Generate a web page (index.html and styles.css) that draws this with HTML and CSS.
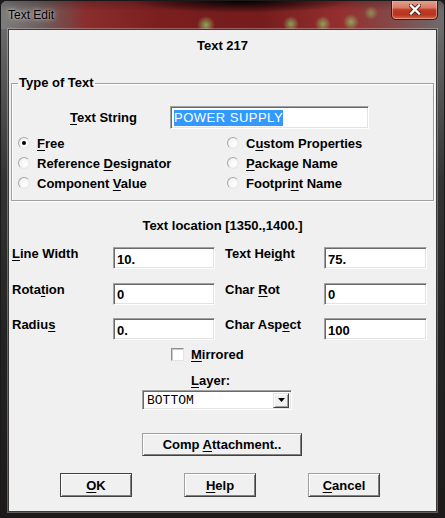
FILE: index.html
```html
<!DOCTYPE html>
<html lang="en">
<head>
    <meta charset="UTF-8">
    <title>Text Edit</title>
    <link rel="stylesheet" href="styles.css">
</head>
<body>
    <div class="window">
        <div class="titlebar">
            <span class="caption">Text Edit</span>
            <span class="close-btn">
                <svg width="12" height="11" viewBox="0 0 12 11">
                    <path d="M2 1.5 L10 9.5 M10 1.5 L2 9.5" stroke="#5a2418" stroke-width="4.2" stroke-linecap="square" fill="none"/>
                    <path d="M2 1.5 L10 9.5 M10 1.5 L2 9.5" stroke="#ffffff" stroke-width="2.4" stroke-linecap="square" fill="none"/>
                </svg>
            </span>
        </div>

        <div class="client">
            <div class="dlg-title">Text 217</div>

            <fieldset class="group">
                <legend>Type of Text</legend>
                <div class="string-row">
                    <span class="string-label"><u>T</u>ext String</span>
                    <div class="edit edit-string"><span class="sel">POWER SUPPLY</span></div>
                </div>
                <div class="radio-grid">
                    <div class="radio"><span class="radio-box checked"></span><span><u>F</u>ree</span></div>
                    <div class="radio"><span class="radio-box"></span><span>C<u>u</u>stom Properties</span></div>
                    <div class="radio"><span class="radio-box"></span><span>Reference <u>D</u>esignator</span></div>
                    <div class="radio"><span class="radio-box"></span><span><u>P</u>ackage Name</span></div>
                    <div class="radio"><span class="radio-box"></span><span>Component <u>V</u>alue</span></div>
                    <div class="radio"><span class="radio-box"></span><span>Footpri<u>n</u>t Name</span></div>
                </div>
            </fieldset>

            <div class="location">Text location [1350.,1400.]</div>

            <div class="field-grid">
                <span class="field-label"><u>L</u>ine Width</span>
                <div class="edit">10.</div>
                <span class="field-label right">Text Hei<u>g</u>ht</span>
                <div class="edit">75.</div>

                <span class="field-label">Rota<u>t</u>ion</span>
                <div class="edit">0</div>
                <span class="field-label right">Char <u>R</u>ot</span>
                <div class="edit">0</div>

                <span class="field-label">Radiu<u>s</u></span>
                <div class="edit">0.</div>
                <span class="field-label right">Char Asp<u>e</u>ct</span>
                <div class="edit">100</div>
            </div>

            <div class="check-row">
                <span class="check-box"></span>
                <span><u>M</u>irrored</span>
            </div>

            <div class="layer-block">
                <div class="layer-label"><u>L</u>ayer:</div>
                <div class="combo">
                    <span class="combo-text">BOTTOM</span>
                    <span class="combo-btn">
                        <svg width="7" height="4" viewBox="0 0 7 4"><path d="M0 0 H7 L3.5 4 Z" fill="#000"/></svg>
                    </span>
                </div>
                <div class="btn btn-comp"><span>Comp <u>A</u>ttachment..</span></div>
            </div>

            <div class="button-row">
                <div class="btn btn-default"><span><u>O</u>K</span></div>
                <div class="btn"><span><u>H</u>elp</span></div>
                <div class="btn"><span><u>C</u>ancel</span></div>
            </div>
        </div>
    </div>
</body>
</html>
```

FILE: styles.css
```css
* {
    margin: 0;
    padding: 0;
    box-sizing: border-box;
}

body {
    background-color: #1c1c1c;
    font-family: "Liberation Sans", Arial, sans-serif;
    font-size: 13px;
    color: #000;
}

u {
    text-decoration-thickness: 1px;
    text-underline-offset: 2px;
}

/* Window frame */
.window {
    width: 445px;
    height: 518px;
    display: flex;
    flex-direction: column;
    border: 1px solid #1a1a1a;
    border-radius: 7px 7px 5px 5px;
    overflow: hidden;
    background: linear-gradient(to bottom, #767676 0, #5e5e5e 60px, #333 180px, #242424 330px, #1e1a1a 100%);
}

.titlebar {
    height: 28px;
    flex-shrink: 0;
    display: flex;
    justify-content: space-between;
    align-items: flex-start;
    background:
        radial-gradient(circle at 205px 24px, rgba(150, 210, 110, 0.75) 0, rgba(150, 210, 110, 0) 9px),
        radial-gradient(circle at 290px 23px, rgba(150, 210, 110, 0.7) 0, rgba(150, 210, 110, 0) 8px),
        radial-gradient(circle at 322px 23px, rgba(150, 210, 110, 0.7) 0, rgba(150, 210, 110, 0) 8px),
        radial-gradient(circle at 350px 21px, rgba(150, 210, 110, 0.7) 0, rgba(150, 210, 110, 0) 8px),
        radial-gradient(circle at 370px 12px, rgba(150, 210, 110, 0.55) 0, rgba(150, 210, 110, 0) 7px),
        radial-gradient(ellipse 110px 12px at 240px 0, #050202 0, rgba(5, 2, 2, 0) 100%),
        linear-gradient(to bottom, rgba(0, 0, 0, 0.2) 0, rgba(0, 0, 0, 0) 10px),
        linear-gradient(to right, #7d7d7d 0, #6d5a5a 45px, #8a2d2d 85px, #7a1e1e 160px, #761c1c 260px, #942f2f 340px, #844a4a 395px, #6c6c6c 443px);
}

.caption {
    padding: 6px 0 0 7px;
    font-size: 12px;
    line-height: 16px;
    color: #000;
    text-shadow: 0 0 6px rgba(255, 255, 255, 0.7), 0 0 3px rgba(255, 255, 255, 0.5);
}

.close-btn {
    width: 47px;
    height: 20px;
    margin-right: 6px;
    margin-top: -1px;
    display: flex;
    align-items: center;
    justify-content: center;
    border: 1px solid #3a1710;
    border-top: none;
    border-radius: 0 0 5px 5px;
    background: linear-gradient(to bottom, #e6a697 0, #d77b66 40%, #c03a22 52%, #b9341e 78%, #d5684c 100%);
    box-shadow: inset 0 0 0 1px rgba(255, 220, 210, 0.45);
}

/* Client area */
.client {
    flex: 1;
    margin: 0 7px 5px 7px;
    background-color: #f0f0f0;
    border: 1px solid #3a3a3a;
    box-shadow: 0 0 0 1px rgba(220, 220, 220, 0.35);
    display: flex;
    flex-direction: column;
    font-weight: bold;
}

.dlg-title {
    margin-top: 8px;
    line-height: 16px;
    text-align: center;
}

/* Type of Text group */
.group {
    margin: 21px 2px 0 2px;
    padding: 0 0 7px 0;
    border: 1px solid #a0a0a0;
    box-shadow: 1px 1px 0 #fff, inset 1px 1px 0 #fff;
    min-width: 0;
}

.group legend {
    margin-left: 6px;
    padding: 0 1px;
    line-height: 16px;
}

.string-row {
    display: flex;
    align-items: center;
    margin-top: 15px;
    padding-left: 58px;
    height: 23px;
}

.string-label {
    width: 100px;
}

.edit {
    height: 22px;
    background-color: #fff;
    border: 1px solid;
    border-color: #a0a0a0 #fff #fff #a0a0a0;
    box-shadow: inset 1px 1px 0 #696969, inset -1px -1px 0 #e3e3e3;
    padding: 0 0 0 3px;
    display: flex;
    align-items: center;
    padding-top: 2px;
}

.edit-string {
    width: 199px;
    height: 23px;
    padding-top: 0;
    font-weight: normal;
}

.sel {
    background-color: #3399ff;
    color: #fff;
    line-height: 16px;
    letter-spacing: 0.5px;
}

.radio-grid {
    display: grid;
    grid-template-columns: 209px 1fr;
    grid-auto-rows: 20px;
    margin-top: 4px;
    padding-left: 6px;
}

.radio {
    display: flex;
    align-items: center;
    gap: 7px;
}

.radio-box {
    width: 12px;
    height: 12px;
    border-radius: 50%;
    border: 1px solid;
    border-color: #a8a8a8 #e6e6e6 #e6e6e6 #a8a8a8;
    background: radial-gradient(circle at 60% 60%, #fff 0, #f4f4f4 60%, #dcdcdc 100%);
    display: flex;
    align-items: center;
    justify-content: center;
}

.radio-box.checked::after {
    content: '';
    width: 4px;
    height: 4px;
    border-radius: 50%;
    background-color: #000;
}

.location {
    margin-top: 17px;
    line-height: 16px;
    text-align: center;
}

/* Numeric fields */
.field-grid {
    display: grid;
    grid-template-columns: 101px 102px 109px 103px;
    grid-template-rows: 22px 22px 22px;
    row-gap: 13.5px;
    margin-top: 13px;
    padding-left: 3px;
}

.field-label {
    line-height: 14px;
}

.field-label.right {
    padding-left: 10px;
}

.check-row {
    display: flex;
    align-items: center;
    gap: 7px;
    margin-top: 6px;
    margin-left: 162px;
    height: 16px;
}

.check-box {
    width: 13px;
    height: 13px;
    background-color: #fff;
    border: 1px solid;
    border-color: #8e8e8e #e3e3e3 #e3e3e3 #8e8e8e;
    box-shadow: inset 1px 1px 0 #c8c8c8;
}

/* Layer and attachment */
.layer-block {
    margin-left: 133px;
    display: flex;
    flex-direction: column;
    align-items: flex-start;
}

.layer-label {
    margin-top: 11px;
    margin-left: 49px;
    line-height: 16px;
}

.combo {
    margin-top: 1px;
    width: 150px;
    height: 20px;
    background-color: #fff;
    border: 1px solid;
    border-color: #a0a0a0 #fff #fff #a0a0a0;
    box-shadow: inset 1px 1px 0 #696969, inset -1px -1px 0 #e3e3e3;
    display: flex;
    align-items: center;
    justify-content: space-between;
    padding: 0 2px 0 4px;
}

.combo-text {
    font-family: "Liberation Mono", "Courier New", monospace;
    font-weight: normal;
    font-size: 13px;
}

.combo-btn {
    width: 16px;
    height: 15px;
    background-color: #f0f0f0;
    border: 1px solid;
    border-color: #e3e3e3 #404040 #404040 #e3e3e3;
    box-shadow: inset 1px 1px 0 #fff, inset -1px -1px 0 #a0a0a0;
    display: flex;
    align-items: center;
    justify-content: center;
}

.btn {
    width: 72px;
    height: 24px;
    display: flex;
    align-items: center;
    justify-content: center;
    background-color: #f0f0f0;
    border: 1px solid;
    border-color: #a0a0a0 #404040 #404040 #a0a0a0;
    box-shadow: inset 1px 1px 0 #fff, inset -1px -1px 0 #808080;
}

.btn-comp {
    margin-top: 23px;
    width: 160px;
    height: 23px;
}

.btn-default {
    border-color: #404040;
}

.button-row {
    display: flex;
    gap: 52px;
    margin-top: 17px;
    padding-left: 51px;
}
```
